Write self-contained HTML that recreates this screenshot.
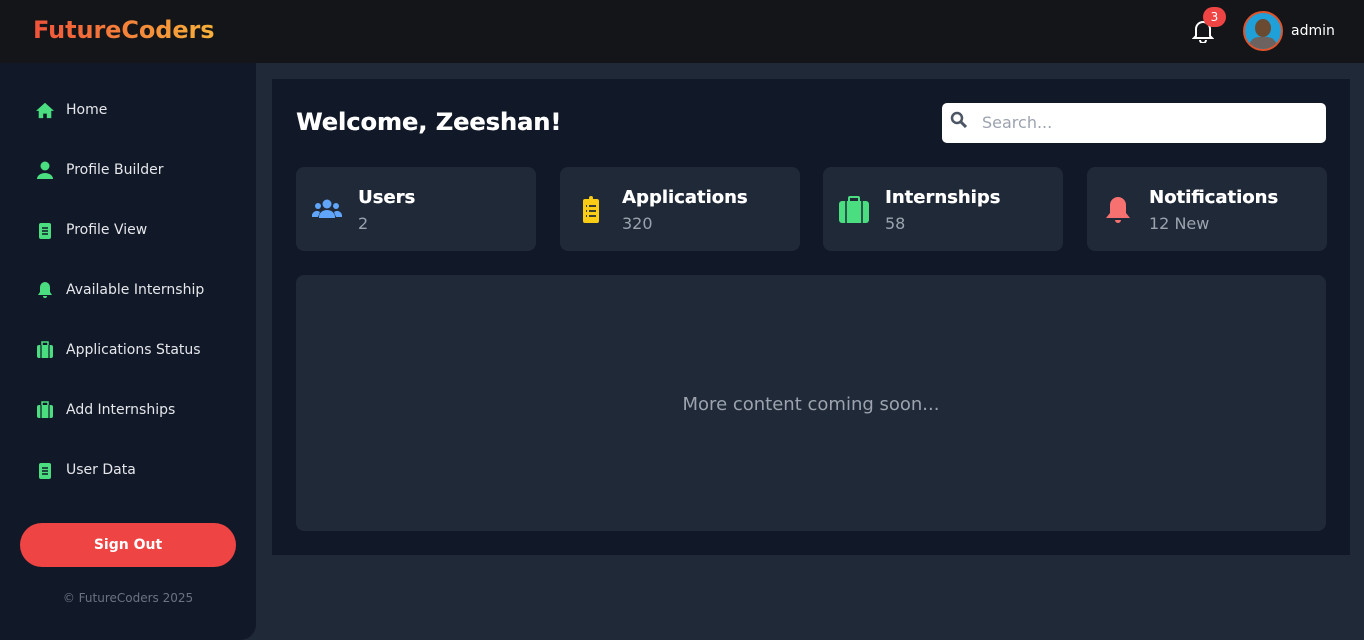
<!DOCTYPE html>
<html><head><meta charset="utf-8"><style>
*{margin:0;padding:0;box-sizing:border-box}
body{width:1364px;height:640px;overflow:hidden;background:#1f2937;font-family:"DejaVu Sans","Liberation Sans",sans-serif;position:relative}
.hdr{position:absolute;left:0;top:0;width:1364px;height:63px;background:#141518}
.logo{position:absolute;left:33px;top:16px;font-weight:bold;font-size:24px;letter-spacing:-0.1px;background:linear-gradient(90deg,#f0523a,#f7b03a);-webkit-background-clip:text;color:transparent}
.side{position:absolute;left:0;top:63px;width:256px;height:577px;background:#111827;border-bottom-right-radius:16px}
.nav{position:absolute;left:36px;display:flex;align-items:center;font-size:14px;color:#e5e7eb}
.nav svg{width:18px;height:18px;margin-right:12px}
.so{position:absolute;left:20px;top:523px;width:216px;height:44px;border-radius:22px;background:#ef4444;color:#fff;font-weight:bold;font-size:14px;text-align:center;line-height:44px}
.copy{position:absolute;left:0;width:256px;top:591px;text-align:center;font-size:12px;color:#6b7280}
.panel{position:absolute;left:272px;top:79px;width:1078px;height:476px;background:#111827}
.wel{position:absolute;left:296px;top:108px;color:#fff;font-weight:bold;font-size:24px;text-shadow:0.4px 0 0 #fff}
.search{position:absolute;left:942px;top:103px;width:384px;height:40px;background:#fff;border-radius:5px}
.search span{position:absolute;left:40px;top:10px;font-size:16px;color:#9ca3af}
.card{position:absolute;top:167px;width:240px;height:84px;background:#1f2937;border-radius:8px}
.card svg{position:absolute;left:16px;top:28px;width:30px;height:30px}
.card b{position:absolute;left:62px;top:20px;color:#fff;font-size:18px;text-shadow:0.3px 0 0 #fff}
.card i{position:absolute;left:62px;top:47px;color:#9ca3af;font-size:16px;font-style:normal}
.big{position:absolute;left:296px;top:275px;width:1030px;height:256px;background:#1f2937;border-radius:8px;text-align:center;line-height:260px;color:#9ca3af;font-size:18px}
</style></head><body>
<div class="hdr"><div class="logo">FutureCoders</div>
<svg style="position:absolute;left:1192px;top:19px" width="22" height="24" viewBox="0 0 22 24"><path d="M4 17V10a7 7 0 0 1 14 0v7l2 2H2z" fill="none" stroke="#fff" stroke-width="2"/><path d="M8 21a3 3 0 0 0 6 0" fill="none" stroke="#fff" stroke-width="2"/></svg>
<div style="position:absolute;left:1203px;top:7px;width:23px;height:20px;border-radius:10px;background:#ef4444;color:#fff;font-size:12px;text-align:center;line-height:20px">3</div>
<div style="position:absolute;left:1243px;top:11px;width:40px;height:40px;border-radius:50%;border:2px solid #e0532b;background:#1fa0d8;overflow:hidden"><div style="position:absolute;left:10px;top:6px;width:16px;height:18px;border-radius:50%;background:#6b4a32"></div><div style="position:absolute;left:4px;top:24px;width:28px;height:20px;border-radius:10px 10px 0 0;background:#6c6360"></div></div>
<div style="position:absolute;left:1291px;top:23px;color:#fff;font-size:14px">admin</div>
</div>
<div class="side">
<div class="nav" style="top:38px"><svg viewBox="0 0 20 18"><path d="M10 1L0 10h3v8h5v-5h4v5h5v-8h3z" fill="#4ade80"/></svg>Home</div>
<div class="nav" style="top:98px"><svg viewBox="0 0 18 18"><circle cx="9" cy="5" r="4.5" fill="#4ade80"/><path d="M1 18a8 6 0 0 1 16 0z" fill="#4ade80"/></svg>Profile Builder</div>
<div class="nav" style="top:158px"><svg viewBox="0 0 18 18"><rect x="3" y="2" width="12" height="16" rx="2" fill="#4ade80"/><path d="M6 7h6M6 10h6M6 13h6" stroke="#111827" stroke-width="1.5"/></svg>Profile View</div>
<div class="nav" style="top:218px"><svg viewBox="0 0 18 18"><path d="M9 1a5 5 0 0 1 5 5v5l2 3H2l2-3V6a5 5 0 0 1 5-5zM7 15h4a2 2 0 0 1-4 0z" fill="#4ade80"/></svg>Available Internship</div>
<div class="nav" style="top:278px"><svg viewBox="0 0 18 18"><rect x="1" y="4" width="16" height="13" rx="2" fill="#4ade80"/><rect x="6" y="1" width="6" height="4" fill="none" stroke="#4ade80" stroke-width="1.5"/><path d="M5 4v13M13 4v13" stroke="#111827" stroke-width="1.2"/></svg>Applications Status</div>
<div class="nav" style="top:338px"><svg viewBox="0 0 18 18"><rect x="1" y="4" width="16" height="13" rx="2" fill="#4ade80"/><rect x="6" y="1" width="6" height="4" fill="none" stroke="#4ade80" stroke-width="1.5"/><path d="M5 4v13M13 4v13" stroke="#111827" stroke-width="1.2"/></svg>Add Internships</div>
<div class="nav" style="top:398px"><svg viewBox="0 0 18 18"><rect x="3" y="2" width="12" height="16" rx="2" fill="#4ade80"/><path d="M6 7h6M6 10h6M6 13h6" stroke="#111827" stroke-width="1.5"/></svg>User Data</div>
</div>
<div class="so">Sign Out</div>
<div class="copy">© FutureCoders 2025</div>
<div class="panel"></div>
<div class="wel">Welcome, Zeeshan!</div>
<div class="search"><svg style="position:absolute;left:8px;top:8px" width="18" height="18" viewBox="0 0 18 18"><circle cx="7" cy="7" r="5" fill="none" stroke="#4b5563" stroke-width="2.5"/><path d="M11 11l5 5" stroke="#4b5563" stroke-width="3"/></svg><span>Search...</span></div>
<div class="card" style="left:296px"><svg viewBox="0 0 30 30"><circle cx="15" cy="9" r="4.5" fill="#60a5fa"/><circle cx="6" cy="11" r="3" fill="#60a5fa"/><circle cx="24" cy="11" r="3" fill="#60a5fa"/><path d="M7 22a8 7 0 0 1 16 0v1H7z" fill="#60a5fa"/><path d="M0 20a5 5 0 0 1 8-3l-2 5H0zM30 20a5 5 0 0 0-8-3l2 5h6z" fill="#60a5fa"/></svg><b>Users</b><i>2</i></div>
<div class="card" style="left:560px"><svg viewBox="0 0 30 30"><rect x="7" y="4" width="16" height="24" rx="2" fill="#facc15"/><circle cx="15" cy="3" r="2" fill="#facc15"/><path d="M10 11h1M13 11h7M10 16h1M13 16h7M10 21h1M13 21h7" stroke="#1f2937" stroke-width="1.8"/></svg><b>Applications</b><i>320</i></div>
<div class="card" style="left:823px"><svg viewBox="0 0 30 30"><rect x="0" y="6" width="30" height="22" rx="3" fill="#4ade80"/><rect x="10" y="2" width="10" height="6" rx="1" fill="none" stroke="#4ade80" stroke-width="2"/><path d="M7 6v22M23 6v22" stroke="#1f2937" stroke-width="1.5"/></svg><b>Internships</b><i>58</i></div>
<div class="card" style="left:1087px"><svg viewBox="0 0 30 30"><path d="M15 2a8 8 0 0 1 8 8v8l4 5H3l4-5v-8a8 8 0 0 1 8-8zM12 25h6a3 3 0 0 1-6 0z" fill="#f87171"/></svg><b>Notifications</b><i>12 New</i></div>
<div class="big">More content coming soon...</div>
</body></html>
